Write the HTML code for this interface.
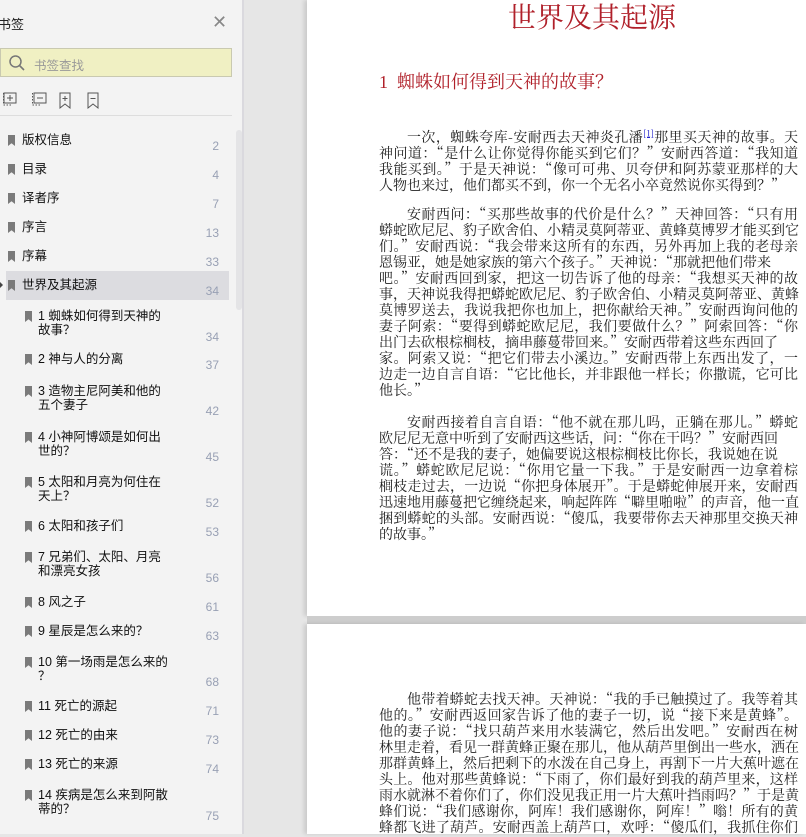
<!DOCTYPE html>
<html><head><meta charset="utf-8"><style>
*{margin:0;padding:0;box-sizing:border-box}
body{width:806px;height:834px;overflow:hidden;position:relative;background:#e6e6e6;font-family:"Liberation Sans","Noto Sans CJK SC",sans-serif}
#side{position:absolute;left:0;top:0;width:244px;height:834px;background:#f3f3f3;border-right:2px solid #dad9de}
.a{position:absolute;white-space:nowrap}
.it{position:absolute;font-size:12.5px;color:#111;line-height:14px}
.n{position:absolute;right:23px;font-size:12px;color:#98a0b4;text-align:right}
.bm{position:absolute;width:7px;height:11px;background:#7a7a7a;clip-path:polygon(0 0,100% 0,100% 100%,50% 75%,0 100%)}
.page{position:absolute;left:307px;width:499px;background:#fff}
.t{position:absolute;left:379px;width:419px;font-family:"Noto Serif CJK SC","Liberation Serif",serif;font-size:14px;line-height:16px;color:#222;white-space:nowrap;text-align:justify;text-align-last:justify;height:16px}
.t.e{text-align-last:left}
.t.i{left:407px;width:391px}
</style></head><body>
<div id="side">
<div class="a" style="left:-2px;top:14px;font-size:13px;color:#222">书签</div>
<div class="a" style="left:212px;top:12px;font-size:18px;color:#888;font-weight:300">✕</div>
<div class="a" style="left:0;top:48px;width:232px;height:29px;background:#f0f0c3;border:1px solid #c9c9b0"></div>
<svg class="a" style="left:8px;top:54px" width="18" height="18"><circle cx="7.5" cy="7.5" r="5.5" fill="none" stroke="#777" stroke-width="1.5"/><line x1="11.5" y1="11.5" x2="16" y2="16" stroke="#777" stroke-width="1.6"/></svg>
<div class="a" style="left:34px;top:55px;font-size:12.5px;color:#999">书签查找</div>
<svg class="a" style="left:0;top:90px" width="110" height="22" fill="none" stroke="#555" stroke-width="1">
<path d="M4 3h12v10H4z M10 5v6 M7 8h6" /><path d="M3.5 3v12h8" stroke-dasharray="1.5 1.5"/>
<path d="M34 3h12v10H34z M37 8h6"/><path d="M32.5 3v12h8" stroke-dasharray="1.5 1.5"/>
<path d="M60 3h10v15l-5-4-5 4z M65 6v5 M62.5 8.5h5"/>
<path d="M88 3h10v15l-5-4-5 4z M90.5 8.5h5"/>
</svg>
<div class="a" style="left:0;top:115px;width:232px;height:1px;background:#ddd"></div>
<div class="a" style="left:236px;top:130px;width:6px;height:180px;background:#e4e4e6;border-radius:3px"></div>
<div class="a" style="left:6px;top:271px;width:223px;height:29px;background:#dcdce0"></div>
<div class="a" style="left:0;top:282px;width:0;height:0;border-left:3px solid #444;border-top:3px solid transparent;border-bottom:3px solid transparent"></div>

<div class="bm" style="left:8px;top:135px"></div><div class="it" style="left:22px;top:133px">版权信息</div><div class="n" style="top:139px">2</div>
<div class="bm" style="left:8px;top:164px"></div><div class="it" style="left:22px;top:162px">目录</div><div class="n" style="top:168px">4</div>
<div class="bm" style="left:8px;top:193px"></div><div class="it" style="left:22px;top:191px">译者序</div><div class="n" style="top:197px">7</div>
<div class="bm" style="left:8px;top:222px"></div><div class="it" style="left:22px;top:220px">序言</div><div class="n" style="top:226px">13</div>
<div class="bm" style="left:8px;top:251px"></div><div class="it" style="left:22px;top:249px">序幕</div><div class="n" style="top:255px">33</div>
<div class="bm" style="left:8px;top:280px"></div><div class="it" style="left:22px;top:278px">世界及其起源</div><div class="n" style="top:284px">34</div>

<div class="bm" style="left:25px;top:311px"></div><div class="it" style="left:38px;top:309px">1 蜘蛛如何得到天神的<br>故事？</div><div class="n" style="top:330px">34</div>
<div class="bm" style="left:25px;top:354px"></div><div class="it" style="left:38px;top:352px">2 神与人的分离</div><div class="n" style="top:358px">37</div>
<div class="bm" style="left:25px;top:386px"></div><div class="it" style="left:38px;top:384px">3 造物主尼阿美和他的<br>五个妻子</div><div class="n" style="top:404px">42</div>
<div class="bm" style="left:25px;top:432px"></div><div class="it" style="left:38px;top:430px">4 小神阿博颂是如何出<br>世的？</div><div class="n" style="top:450px">45</div>
<div class="bm" style="left:25px;top:477px"></div><div class="it" style="left:38px;top:475px">5 太阳和月亮为何住在<br>天上？</div><div class="n" style="top:496px">52</div>
<div class="bm" style="left:25px;top:521px"></div><div class="it" style="left:38px;top:519px">6 太阳和孩子们</div><div class="n" style="top:525px">53</div>
<div class="bm" style="left:25px;top:552px"></div><div class="it" style="left:38px;top:550px">7 兄弟们、太阳、月亮<br>和漂亮女孩</div><div class="n" style="top:571px">56</div>
<div class="bm" style="left:25px;top:597px"></div><div class="it" style="left:38px;top:595px">8 风之子</div><div class="n" style="top:600px">61</div>
<div class="bm" style="left:25px;top:626px"></div><div class="it" style="left:38px;top:624px">9 星辰是怎么来的？</div><div class="n" style="top:629px">63</div>
<div class="bm" style="left:25px;top:657px"></div><div class="it" style="left:38px;top:655px">10 第一场雨是怎么来的<br>？</div><div class="n" style="top:675px">68</div>
<div class="bm" style="left:25px;top:701px"></div><div class="it" style="left:38px;top:699px">11 死亡的源起</div><div class="n" style="top:704px">71</div>
<div class="bm" style="left:25px;top:730px"></div><div class="it" style="left:38px;top:728px">12 死亡的由来</div><div class="n" style="top:733px">73</div>
<div class="bm" style="left:25px;top:759px"></div><div class="it" style="left:38px;top:757px">13 死亡的来源</div><div class="n" style="top:762px">74</div>
<div class="bm" style="left:25px;top:790px"></div><div class="it" style="left:38px;top:788px">14 疾病是怎么来到阿散<br>蒂的？</div><div class="n" style="top:809px">75</div>
</div>

<div class="page" style="top:0;height:616px;box-shadow:-3px 0 4px rgba(0,0,0,.12)"></div>
<div class="a" style="left:307px;top:616px;width:499px;height:8px;background:#cdcdcd"></div>
<div class="page" style="top:624px;height:210px;box-shadow:-3px 0 4px rgba(0,0,0,.12)"></div>

<div class="a" style="left:508px;top:-4px;font-family:'Noto Serif CJK SC','Liberation Serif',serif;font-size:28px;color:#b0202a">世界及其起源</div>
<div class="a" style="left:379px;top:68px;font-family:'Liberation Serif','Noto Serif CJK SC',serif;font-size:18px;color:#b0202a">1&nbsp; 蜘蛛如何得到天神的故事？</div>

<div class="t i" style="top:129px">一次，蜘蛛夸库-安耐西去天神炎孔潘<sup style="font-size:9px;color:#22c;text-decoration:underline;line-height:0">[1]</sup>那里买天神的故事。天</div>
<div class="t" style="top:145px">神问道：“是什么让你觉得你能买到它们？”安耐西答道：“我知道</div>
<div class="t" style="top:161px">我能买到。”于是天神说：“像可可弗、贝夸伊和阿苏蒙亚那样的大</div>
<div class="t e" style="top:177px">人物也来过，他们都买不到，你一个无名小卒竟然说你买得到？”</div>

<div class="t i" style="top:206px">安耐西问：“买那些故事的代价是什么？”天神回答：“只有用</div>
<div class="t" style="top:222px">蟒蛇欧尼尼、豹子欧舍伯、小精灵莫阿蒂亚、黄蜂莫博罗才能买到它</div>
<div class="t" style="top:238px">们。”安耐西说：“我会带来这所有的东西，另外再加上我的老母亲</div>
<div class="t e" style="top:254px">恩锡亚，她是她家族的第六个孩子。”天神说：“那就把他们带来</div>
<div class="t" style="top:270px">吧。”安耐西回到家，把这一切告诉了他的母亲：“我想买天神的故</div>
<div class="t" style="top:286px">事，天神说我得把蟒蛇欧尼尼、豹子欧舍伯、小精灵莫阿蒂亚、黄蜂</div>
<div class="t" style="top:302px">莫博罗送去，我说我把你也加上，把你献给天神。”安耐西询问他的</div>
<div class="t" style="top:318px">妻子阿索：“要得到蟒蛇欧尼尼，我们要做什么？”阿索回答：“你</div>
<div class="t e" style="top:334px">出门去砍根棕榈枝，摘串藤蔓带回来。”安耐西带着这些东西回了</div>
<div class="t" style="top:350px">家。阿索又说：“把它们带去小溪边。”安耐西带上东西出发了，一</div>
<div class="t" style="top:366px">边走一边自言自语：“它比他长，并非跟他一样长；你撒谎，它可比</div>
<div class="t e" style="top:382px">他长。”</div>

<div class="t i" style="top:414px">安耐西接着自言自语：“他不就在那儿吗，正躺在那儿。”蟒蛇</div>
<div class="t e" style="top:430px">欧尼尼无意中听到了安耐西这些话，问：“你在干吗？”安耐西回</div>
<div class="t e" style="top:446px">答：“还不是我的妻子，她偏要说这根棕榈枝比你长，我说她在说</div>
<div class="t" style="top:462px">谎。”蟒蛇欧尼尼说：“你用它量一下我。”于是安耐西一边拿着棕</div>
<div class="t" style="top:478px">榈枝走过去，一边说“你把身体展开”。于是蟒蛇伸展开来，安耐西</div>
<div class="t" style="top:494px">迅速地用藤蔓把它缠绕起来，响起阵阵“噼里啪啦”的声音，他一直</div>
<div class="t" style="top:510px">捆到蟒蛇的头部。安耐西说：“傻瓜，我要带你去天神那里交换天神</div>
<div class="t e" style="top:526px">的故事。”</div>

<div class="t i" style="top:691px">他带着蟒蛇去找天神。天神说：“我的手已触摸过了。我等着其</div>
<div class="t" style="top:707px">他的。”安耐西返回家告诉了他的妻子一切，说“接下来是黄蜂”。</div>
<div class="t" style="top:723px">他的妻子说：“找只葫芦来用水装满它，然后出发吧。”安耐西在树</div>
<div class="t" style="top:739px">林里走着，看见一群黄蜂正聚在那儿，他从葫芦里倒出一些水，洒在</div>
<div class="t" style="top:755px">那群黄蜂上，然后把剩下的水泼在自己身上，再割下一片大蕉叶遮在</div>
<div class="t" style="top:771px">头上。他对那些黄蜂说：“下雨了，你们最好到我的葫芦里来，这样</div>
<div class="t" style="top:787px">雨水就淋不着你们了，你们没见我正用一片大蕉叶挡雨吗？”于是黄</div>
<div class="t" style="top:803px">蜂们说：“我们感谢你，阿库！我们感谢你，阿库！”嗡！所有的黄</div>
<div class="t" style="top:819px">蜂都飞进了葫芦。安耐西盖上葫芦口，欢呼：“傻瓜们，我抓住你们</div>
</body></html>
